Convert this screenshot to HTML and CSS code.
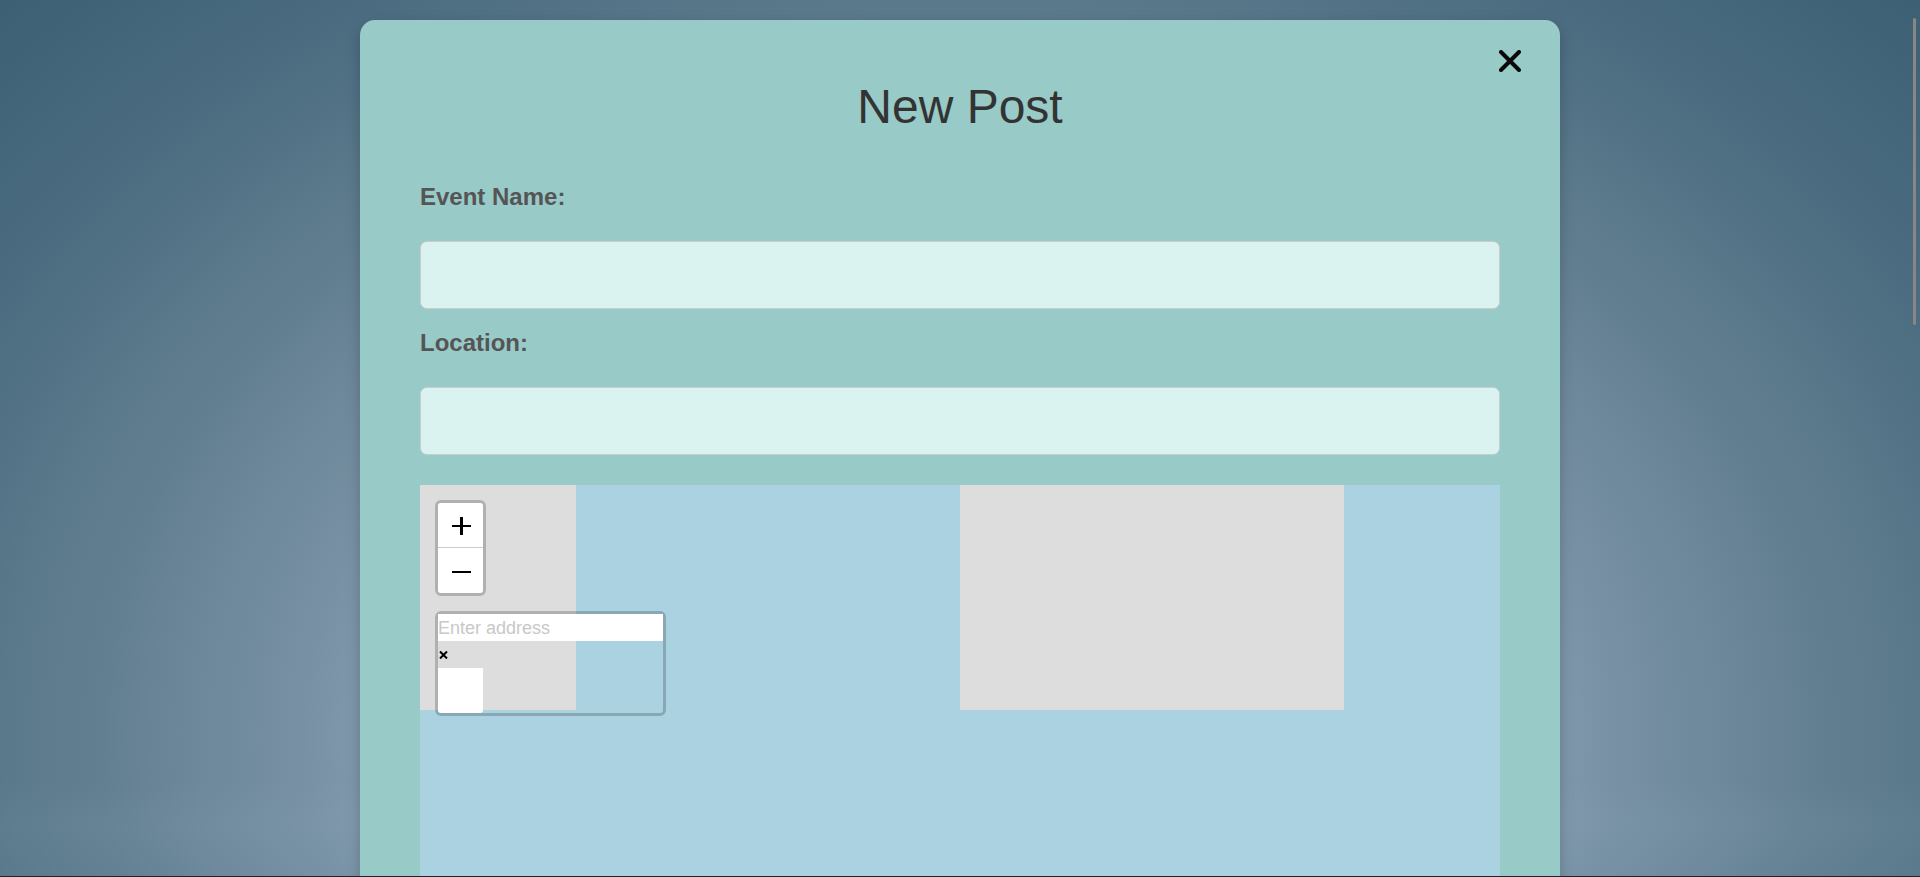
FILE: index.html
```html
<!DOCTYPE html>
<html lang="en">
<head>
<meta charset="utf-8">
<title>New Post</title>
<link rel="stylesheet" href="styles.css">
</head>
<body>
<div class="overlay">
  <main class="modal">
    <button class="close" type="button" aria-label="Close">
      <svg viewBox="0 0 22 22" width="22" height="22" aria-hidden="true"><path d="M2 2 20 20M20 2 2 20"/></svg>
    </button>
    <h1 class="title">New Post</h1>
    <form class="form">
      <label class="label" for="event-name">Event Name:</label>
      <input class="field" id="event-name" type="text">
      <label class="label" for="location">Location:</label>
      <input class="field" id="location" type="text">
      <div class="map">
        <div class="tiles" aria-hidden="true">
          <div class="tile-missing"></div><div></div><div class="tile-missing"></div><div></div>
        </div>
        <div class="controls">
          <div class="zoom">
            <button class="zoom-button" type="button" aria-label="Zoom in">
              <svg viewBox="0 0 19 19" width="19" height="19" aria-hidden="true"><path d="M0 9h19v2H0zM8 1h3v18H8z"/></svg>
            </button>
            <button class="zoom-button" type="button" aria-label="Zoom out">
              <svg viewBox="0 0 19 19" width="19" height="19" aria-hidden="true"><path d="M0 10h19v2H0z"/></svg>
            </button>
          </div>
          <div class="search">
            <input class="search-input" type="text" placeholder="Enter address" aria-label="Enter address">
            <button class="search-reset" type="button" aria-label="Reset">
              <svg viewBox="0 0 9 9" width="9" height="9" aria-hidden="true"><path d="M1 1.500 8 8.500M8 1.500 1 8.500"/></svg>
            </button>
            <button class="search-submit" type="button" aria-label="Search"></button>
          </div>
        </div>
      </div>
    </form>
  </main>
  <div class="scroll-thumb"></div>
</div>
</body>
</html>
```
FILE: styles.css
```css
* {
  box-sizing: border-box;
}

body {
  margin: 0;
  height: 100vh;
  overflow: hidden;
  background: #222226;
  font-family: Arial, "Liberation Sans", sans-serif;
}

button {
  border: 0;
  padding: 0;
  cursor: pointer;
}

.overlay {
  position: relative;
  height: calc(100vh - 1px);
  overflow: hidden;
  padding: 20px;
  background:
    linear-gradient(transparent 89%, rgba(170, 205, 220, 0.06) 94%, rgba(120, 160, 180, 0.06) 100%),
    radial-gradient(ellipse 71% 120% at 50% 84%, #7f98ab 44%, #7891a4 48%, #6d889a 56%, #627f91 63%, #5a798a 70%, #537286 75%, #4b6c80 82%, #3c5f73 100%);
}

.modal {
  position: relative;
  max-width: 1200px;
  margin: 0 auto;
  padding: 60px;
  border-radius: 15px;
  background: #98cac7;
  box-shadow: 0 5px 15px rgba(0, 0, 0, 0.2);
}

.close {
  position: absolute;
  top: 30px;
  right: 39px;
  width: 22px;
  height: 22px;
  background: none;
}

.close svg,
.zoom-button svg,
.search-reset svg {
  display: block;
}

.close path {
  stroke: #0a0a0a;
  stroke-width: 4;
  stroke-linecap: round;
}

.title {
  margin: 0 0 30px;
  color: #333;
  font-size: 48px;
  font-weight: 400;
  line-height: 53px;
  text-align: center;
}

.form {
  display: flex;
  flex-direction: column;
}

.label {
  margin: 20px 0 30px;
  color: #555;
  font-size: 24px;
  font-weight: 700;
  line-height: 28px;
}

.field {
  width: 100%;
  height: 68px;
  padding: 15px;
  border: 1px solid #ccc;
  border-radius: 7px;
  background: #dbf3f0;
  font: 24px Arial, "Liberation Sans", sans-serif;
}

.map {
  position: relative;
  height: 600px;
  margin-top: 30px;
  background: #abd2e0;
}

.tiles {
  display: grid;
  grid-template-columns: 1fr 384px 384px 1fr;
  height: 225px;
}

.tile-missing {
  background: #ddd;
}

.controls {
  position: absolute;
  top: 15px;
  left: 15px;
  display: flex;
  flex-direction: column;
  align-items: flex-start;
  gap: 15px;
}

.zoom,
.search {
  display: flex;
  flex-direction: column;
  border: 3px solid rgba(0, 0, 0, 0.2);
  border-radius: 6px;
  background-clip: padding-box;
}

.zoom-button {
  display: grid;
  place-items: center;
  width: 45px;
  height: 45px;
  padding-left: 2px;
  background: #fff;
}

.zoom-button:first-child {
  border-bottom: 1px solid #ccc;
  border-radius: 3px 3px 0 0;
}

.zoom-button:last-child {
  border-radius: 0 0 3px 3px;
}

.search {
  width: 231px;
}

.search-input {
  width: 100%;
  height: 27px;
  padding: 1px 0 0;
  border: 0;
  background: #fff;
  font: 18px Arial, "Liberation Sans", sans-serif;
}

.search-input::placeholder {
  color: #c8c8c8;
}

.search-reset {
  display: flex;
  align-items: center;
  width: 10px;
  height: 27px;
  padding-left: 1px;
  background: none;
}

.search-reset path {
  stroke: #000;
  stroke-width: 2;
}

.search-submit {
  width: 45px;
  height: 45px;
  border-radius: 0 0 3px 3px;
  background: #fff;
}

.scroll-thumb {
  position: absolute;
  top: 18px;
  right: 4px;
  width: 3px;
  height: 35%;
  border-radius: 2px;
  background: #8a8686;
}
```
